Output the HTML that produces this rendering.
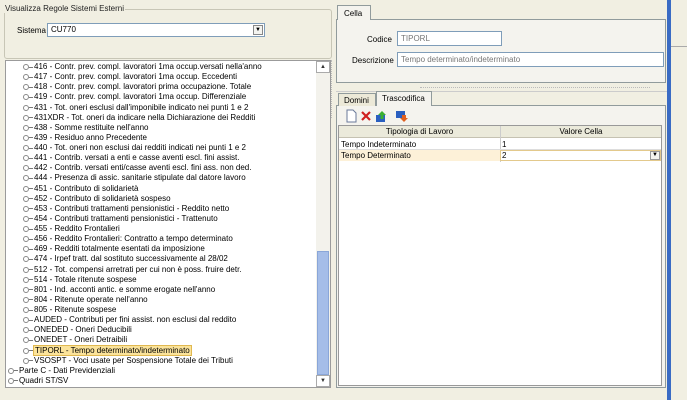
<!DOCTYPE html>
<html><head><meta charset="utf-8"><style>
*{box-sizing:border-box;margin:0;padding:0}
body{width:687px;height:400px;background:#f1efe2;font-family:"Liberation Sans",sans-serif;font-size:8px;color:#000;position:relative;overflow:hidden}
.a{position:absolute}
.inp{position:absolute;background:#fff;border:1px solid #7f9db9;padding:1px 3px;font-size:8px;line-height:11px;color:#777}
.tree div{height:10.13px;line-height:10px;white-space:nowrap;position:relative;font-size:8px}
.ic{display:inline-block;width:6px;height:6px;border:1px solid #888;border-radius:50%;vertical-align:-1px;position:relative}
.ic:after{content:"";position:absolute;left:5px;top:1.5px;width:4px;height:1px;background:#777}
.c{padding-left:18px}
.tx{margin-left:5px}
</style></head><body>
<!-- left fieldset -->
<div class="a" style="left:4px;top:9px;width:328px;height:50px;border:1px solid #c8c6b6;border-radius:3px"></div>
<div class="a" style="left:4px;top:4px;background:#f1efe2;padding:0 1px;font-size:8px;color:#222">Visualizza Regole Sistemi Esterni</div>
<div class="a" style="left:17px;top:26px;font-size:8px">Sistema</div>
<div class="a" style="left:47px;top:23px;width:218px;height:14px;background:#fff;border:1px solid #7f9db9;font-size:8px;padding:1px 3px;line-height:10px">CU770</div>
<div class="a" style="left:253px;top:25px;width:10px;height:10px;border:1px solid #888;background:#f4f4f0;font-size:6px;text-align:center;line-height:8px">▼</div>
<!-- tree -->
<div class="a" style="left:5px;top:60px;width:326px;height:328px;background:#fff;border:1px solid #9b9b9b"></div>
<div class="a tree" style="left:5px;top:62px;width:310px">
<div class="c"><span class="ic"></span><span class="tx">416 - Contr. prev. compl. lavoratori 1ma occup.versati nella'anno</span></div>
<div class="c"><span class="ic"></span><span class="tx">417 - Contr. prev. compl. lavoratori 1ma occup. Eccedenti</span></div>
<div class="c"><span class="ic"></span><span class="tx">418 - Contr. prev. compl. lavoratori prima occupazione. Totale</span></div>
<div class="c"><span class="ic"></span><span class="tx">419 - Contr. prev. compl. lavoratori 1ma occup. Differenziale</span></div>
<div class="c"><span class="ic"></span><span class="tx">431 - Tot. oneri esclusi dall'imponibile indicato nei punti 1  e 2</span></div>
<div class="c"><span class="ic"></span><span class="tx">431XDR - Tot. oneri da indicare nella Dichiarazione dei Redditi</span></div>
<div class="c"><span class="ic"></span><span class="tx">438 - Somme restituite nell'anno</span></div>
<div class="c"><span class="ic"></span><span class="tx">439 - Residuo anno Precedente</span></div>
<div class="c"><span class="ic"></span><span class="tx">440 - Tot. oneri non esclusi dai redditi indicati nei punti 1 e 2</span></div>
<div class="c"><span class="ic"></span><span class="tx">441 - Contrib. versati a enti e casse aventi escl. fini assist.</span></div>
<div class="c"><span class="ic"></span><span class="tx">442 - Contrib. versati enti/casse aventi escl. fini ass. non ded.</span></div>
<div class="c"><span class="ic"></span><span class="tx">444 - Presenza di assic. sanitarie stipulate dal datore lavoro</span></div>
<div class="c"><span class="ic"></span><span class="tx">451 - Contributo di solidarietà</span></div>
<div class="c"><span class="ic"></span><span class="tx">452 - Contributo di solidarietà sospeso</span></div>
<div class="c"><span class="ic"></span><span class="tx">453 - Contributi trattamenti pensionistici - Reddito netto</span></div>
<div class="c"><span class="ic"></span><span class="tx">454 - Contributi trattamenti pensionistici - Trattenuto</span></div>
<div class="c"><span class="ic"></span><span class="tx">455 - Reddito Frontalieri</span></div>
<div class="c"><span class="ic"></span><span class="tx">456 - Reddito Frontalieri: Contratto a tempo determinato</span></div>
<div class="c"><span class="ic"></span><span class="tx">469 - Redditi totalmente esentati da imposizione</span></div>
<div class="c"><span class="ic"></span><span class="tx">474 - Irpef tratt. dal sostituto successivamente al 28/02</span></div>
<div class="c"><span class="ic"></span><span class="tx">512 - Tot. compensi arretrati per cui non è poss. fruire detr.</span></div>
<div class="c"><span class="ic"></span><span class="tx">514 - Totale ritenute sospese</span></div>
<div class="c"><span class="ic"></span><span class="tx">801 - Ind. acconti antic. e somme erogate nell'anno</span></div>
<div class="c"><span class="ic"></span><span class="tx">804 - Ritenute operate nell'anno</span></div>
<div class="c"><span class="ic"></span><span class="tx">805 - Ritenute sospese</span></div>
<div class="c"><span class="ic"></span><span class="tx">AUDED - Contributi per fini assist. non esclusi dal reddito</span></div>
<div class="c"><span class="ic"></span><span class="tx">ONEDED - Oneri Deducibili</span></div>
<div class="c"><span class="ic"></span><span class="tx">ONEDET - Oneri Detraibili</span></div>
<div class="c"><span class="ic"></span><span class="tx" style="background:#fbe39a;border:1px solid #e0b850;padding:0 1px;margin-left:4px">TIPORL - Tempo determinato/indeterminato</span></div>
<div class="c"><span class="ic"></span><span class="tx">VSOSPT - Voci usate per Sospensione Totale dei Tributi</span></div>
<div style="padding-left:3px"><span class="ic"></span><span class="tx">Parte C - Dati Previdenziali</span></div>
<div style="padding-left:3px"><span class="ic"></span><span class="tx">Quadri ST/SV</span></div>
</div>
<!-- scrollbar -->
<div class="a" style="left:316px;top:61px;width:14px;height:326px;background:#f3f2ec"></div>
<div class="a" style="left:316px;top:61px;width:14px;height:12px;background:#fff;border:1px solid #aaa;font-size:6px;text-align:center;line-height:10px;color:#333">▲</div>
<div class="a" style="left:317px;top:251px;width:12px;height:124px;background:#a5bde8;border:1px solid #8aa6d8"></div>
<div class="a" style="left:316px;top:375px;width:14px;height:12px;background:#fff;border:1px solid #aaa;font-size:6px;text-align:center;line-height:10px;color:#333">▼</div>
<div class="a" style="left:331px;top:60px;width:1px;height:58px;border-left:1px dotted #bbb"></div>
<!-- right top -->
<div class="a" style="left:336px;top:19px;width:330px;height:64px;border:1px solid #919b9c;background:#f4f3ee"></div>
<div class="a" style="left:337px;top:5px;width:34px;height:15px;border:1px solid #919b9c;border-bottom:none;background:#f4f3ee;padding:3px 6px;font-size:8px">Cella</div>
<div class="a" style="left:367px;top:35px;font-size:8px">Codice</div>
<div class="inp" style="left:397px;top:31px;width:105px;height:15px">TIPORL</div>
<div class="a" style="left:352px;top:56px;font-size:8px">Descrizione</div>
<div class="inp" style="left:397px;top:52px;width:267px;height:15px">Tempo determinato/indeterminato</div>
<div class="a" style="left:420px;top:87px;width:230px;border-top:1px dotted #bbb"></div>
<div class="a" style="left:336px;top:91px;width:332px;height:1px;background:#ccc"></div>
<!-- lower tabs -->
<div class="a" style="left:336px;top:105px;width:330px;height:283px;border:1px solid #919b9c;background:#f4f3ee"></div>
<div class="a" style="left:338px;top:93px;width:38px;height:13px;border:1px solid #919b9c;border-bottom:none;background:#ece9d8;padding:2px 5px;font-size:8px">Domini</div>
<div class="a" style="left:376px;top:91px;width:56px;height:15px;border:1px solid #919b9c;border-bottom:none;background:#f4f3ee;padding:2px 5px;font-size:8px">Trascodifica</div>
<!-- toolbar -->
<svg class="a" style="left:345px;top:109px" width="80" height="14">
<path d="M2 1h6l3 3v9H2z" fill="#fff" stroke="#6a7a9a"/>
<path d="M17 3l8 8M25 3l-8 8" stroke="#d02020" stroke-width="2.2"/>
<rect x="31" y="6" width="9" height="7" fill="#2a5fc0"/><path d="M37 2l4 4h-2.5v4h-3V6H33z" fill="#3cb030"/>
<rect x="51" y="2" width="9" height="7" fill="#2a5fc0"/><path d="M57 6h4v3h2l-4 4-4-4h2z" fill="#e06020"/>
</svg>
<!-- table -->
<div class="a" style="left:338px;top:125px;width:324px;height:261px;background:#fff;border:1px solid #999"></div>
<div class="a" style="left:339px;top:126px;width:322px;height:12px;background:#ebeadb;border-bottom:1px solid #c5c2b2"></div>
<div class="a" style="left:339px;top:127px;width:161px;text-align:center;font-size:8px">Tipologia di Lavoro</div>
<div class="a" style="left:501px;top:127px;width:160px;text-align:center;font-size:8px">Valore Cella</div>
<div class="a" style="left:500px;top:126px;width:1px;height:36px;background:#ccc"></div>
<div class="a" style="left:339px;top:149px;width:322px;height:1px;background:#ddd"></div>
<div class="a" style="left:341px;top:140px;font-size:8px">Tempo Indeterminato</div>
<div class="a" style="left:502px;top:140px;font-size:8px">1</div>
<div class="a" style="left:339px;top:150px;width:161px;height:11px;background:#fdf1d8"></div>
<div class="a" style="left:500px;top:150px;width:161px;height:11px;background:#fff;border:1px solid #e3c98c"></div>
<div class="a" style="left:341px;top:151px;font-size:8px">Tempo Determinato</div>
<div class="a" style="left:502px;top:151px;font-size:8px">2</div>
<div class="a" style="left:650px;top:151px;width:10px;height:9px;border:1px solid #999;background:#f4f4f0;font-size:6px;text-align:center;line-height:7px">▼</div>
<!-- blue bar & right -->
<div class="a" style="left:667px;top:0;width:4px;height:400px;background:#3a6bc4"></div>
<div class="a" style="left:671px;top:46px;width:16px;height:1px;background:#aaa"></div>
</body></html>
